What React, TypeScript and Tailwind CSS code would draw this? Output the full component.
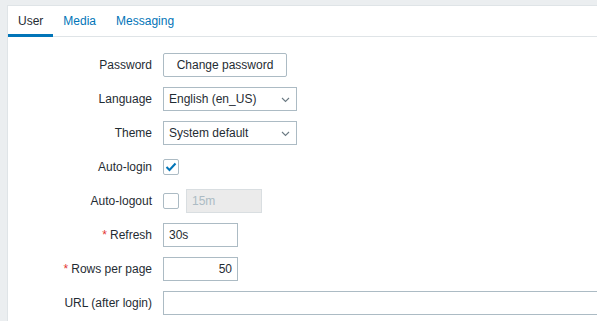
import React from "react";

const font = { fontFamily: '"Liberation Sans", Arial, sans-serif' };

function Label({ text, required }: { text: string; required?: boolean }) {
	return (
		<div className="text-right text-[12px] text-[#1f2c33] leading-none">
			{required && <span className="text-[#e33734] mr-[3px]">*</span>}
			{text}
		</div>
	);
}

function Select({ value, width }: { value: string; width: string }) {
	return (
		<div
			className={`${width} h-[24px] border border-[#acbbc4] bg-white flex items-center justify-between pl-[5px] pr-[6px] text-[12px] text-[#1f2c33]`}
		>
			<span>{value}</span>
			<svg width="9" height="6" viewBox="0 0 9 6" className="mt-[1px]">
				<polyline points="1,1 4.5,4.5 8,1" fill="none" stroke="#6b7a83" strokeWidth="1.1" />
			</svg>
		</div>
	);
}

function Checkbox({ checked }: { checked?: boolean }) {
	return (
		<div className="w-[16px] h-[16px] border border-[#acbbc4] bg-white flex items-center justify-center rounded-[2px]">
			{checked && (
				<svg width="12" height="10" viewBox="0 0 12 10">
					<polyline points="1.5,5 4.5,8 10.5,1.5" fill="none" stroke="#0275b8" strokeWidth="2" />
				</svg>
			)}
		</div>
	);
}

export default function App() {
	return (
		<div className="w-[597px] h-[321px] overflow-hidden bg-[#ebeef0] pt-[5px] pl-[7px]" style={font}>
			<div className="w-[620px] h-[400px] bg-white border-l border-t border-[#dfe4e7]">
				{/* Tabs */}
				<div className="h-[31px] border-b border-[#dfe4e7] flex text-[12px]">
					<div className="relative px-[10px] pt-[6px] text-[#1f2c33]">
						User
						<div className="absolute left-0 right-0 bottom-[-1px] h-[3px] bg-[#0275b8]" />
					</div>
					<div className="px-[10px] pt-[6px] text-[#0275b8]">Media</div>
					<div className="px-[10px] pt-[6px] text-[#0275b8]">Messaging</div>
				</div>

				{/* Form */}
				<div className="grid grid-cols-[144px_1fr] gap-x-[11px] gap-y-[10px] pt-[15px] items-center">
					<Label text="Password" />
					<div>
						<button
							type="button"
							className="w-[124px] h-[24px] border border-[#acbbc4] bg-white text-[12px] text-[#1f2c33] rounded-[2px]"
						>
							Change password
						</button>
					</div>

					<Label text="Language" />
					<Select value="English (en_US)" width="w-[134px]" />

					<Label text="Theme" />
					<Select value="System default" width="w-[134px]" />

					<Label text="Auto-login" />
					<div className="h-[24px] flex items-center">
						<Checkbox checked />
					</div>

					<Label text="Auto-logout" />
					<div className="h-[24px] flex items-center gap-[7px]">
						<Checkbox />
						<div className="w-[76px] h-[24px] border border-[#d9dee1] bg-[#ebebeb] text-[12px] text-[#acbbc4] flex items-center pl-[5px]">
							15m
						</div>
					</div>

					<Label text="Refresh" required />
					<div className="w-[75px] h-[24px] border border-[#acbbc4] bg-white text-[12px] text-[#1f2c33] flex items-center pl-[5px]">
						30s
					</div>

					<Label text="Rows per page" required />
					<div className="w-[75px] h-[24px] border border-[#acbbc4] bg-white text-[12px] text-[#1f2c33] flex items-center justify-end pr-[5px]">
						50
					</div>

					<Label text="URL (after login)" />
					<div className="w-[453px] h-[24px] border border-[#acbbc4] bg-white" />
				</div>
			</div>
		</div>
	);
}
